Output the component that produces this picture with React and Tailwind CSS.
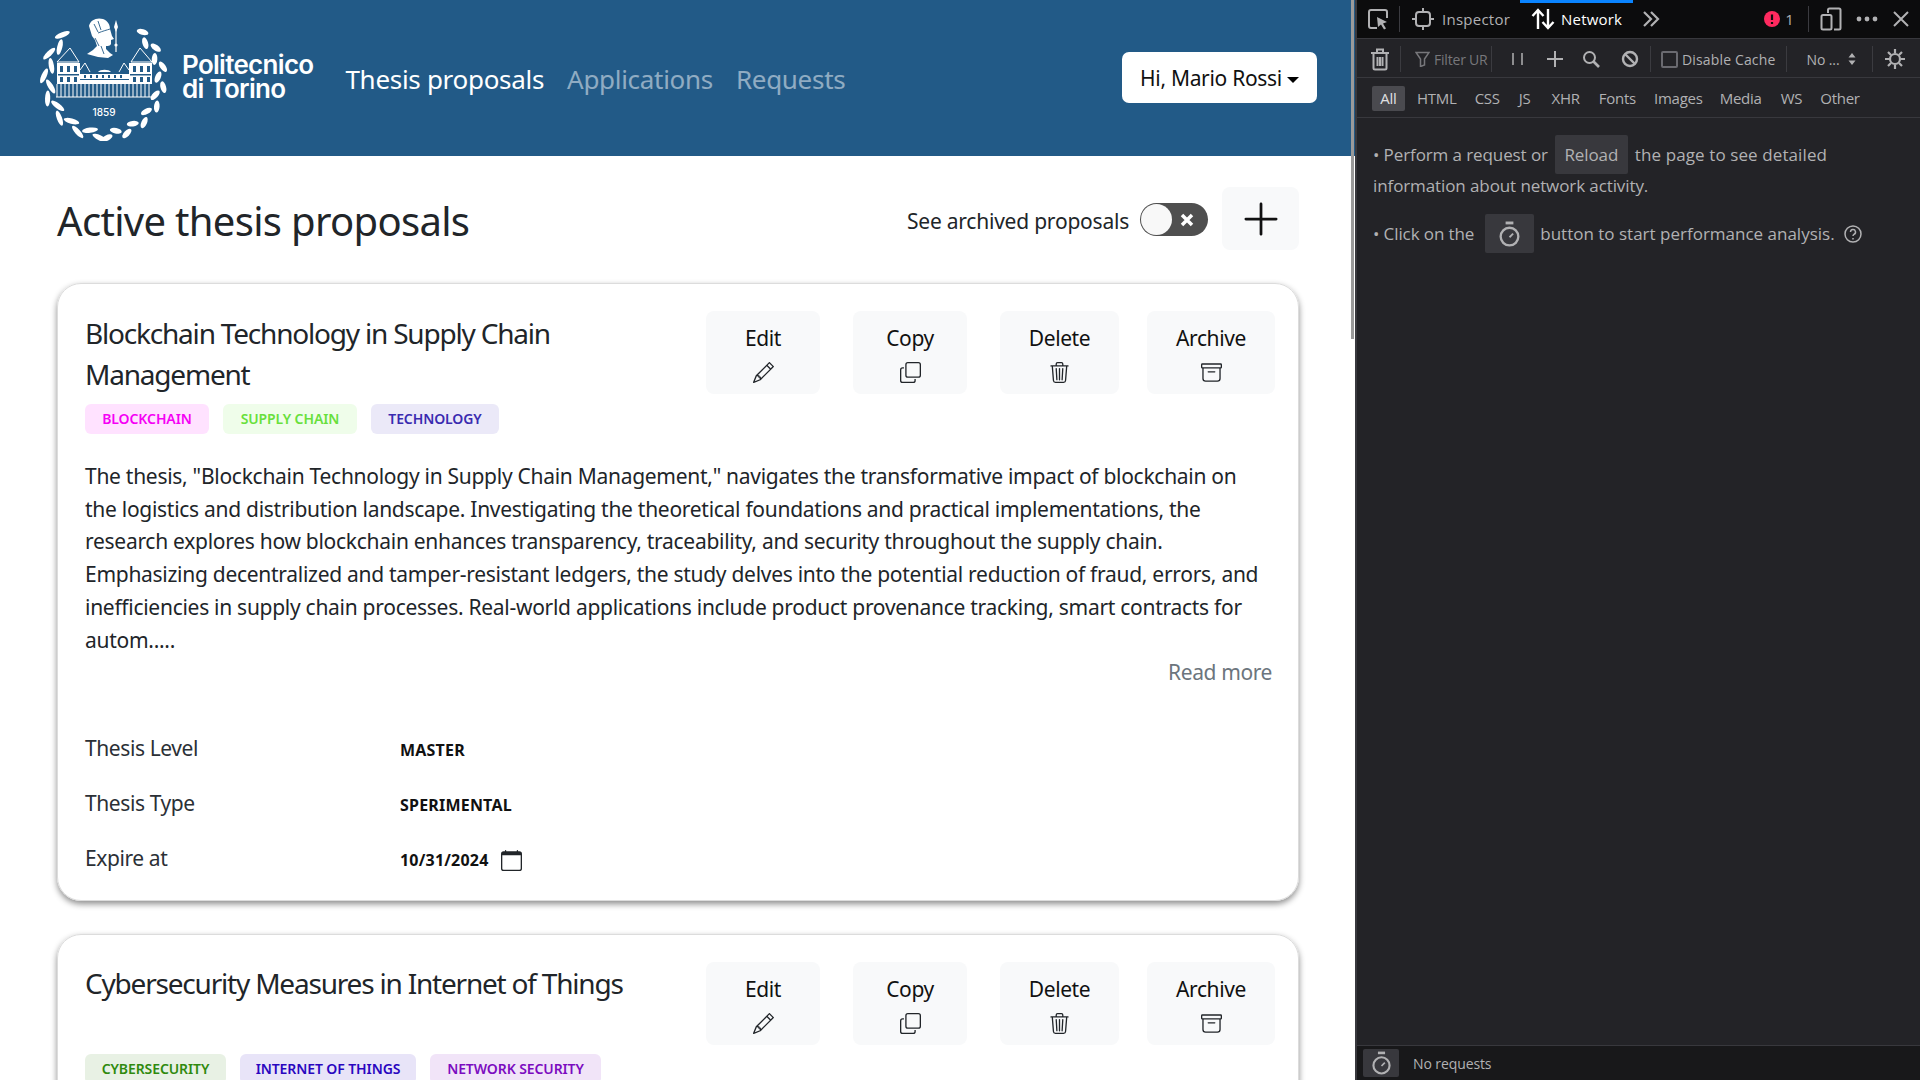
import {
  BsArchive,
  BsCalendar,
  BsCopy,
  BsPencil,
  BsPlusLg,
  BsTrash3,
} from "react-icons/bs";

const tags1 = [
  { label: "BLOCKCHAIN", w: "w-[124px]", cls: "bg-[#ffe2ff] text-[#f500f5]" },
  { label: "SUPPLY CHAIN", w: "w-[134px]", cls: "bg-[#effdea] text-[#68e03c]" },
  { label: "TECHNOLOGY", w: "w-[128px]", cls: "bg-[#ebe9f8] text-[#3a2bb0]" },
];
const tags2 = [
  { label: "CYBERSECURITY", w: "w-[141px]", cls: "bg-[#e8f1e4] text-[#2f8a0e]" },
  { label: "INTERNET OF THINGS", w: "w-[176px]", cls: "bg-[#e8e4f8] text-[#2a06c0]" },
  { label: "NETWORK SECURITY", w: "w-[171px]", cls: "bg-[#f1e4f8] text-[#7c0cc0]" },
];

const description = [
  'The thesis, "Blockchain Technology in Supply Chain Management," navigates the transformative impact of blockchain on',
  "the logistics and distribution landscape. Investigating the theoretical foundations and practical implementations, the",
  "research explores how blockchain enhances transparency, traceability, and security throughout the supply chain.",
  "Emphasizing decentralized and tamper-resistant ledgers, the study delves into the potential reduction of fraud, errors, and",
  "inefficiencies in supply chain processes. Real-world applications include product provenance tracking, smart contracts for",
  "autom.....",
];

const Leaf = ({ x, y, rot, rx = 8, ry = 2.6 }) => (
  <ellipse cx={x} cy={y} rx={rx} ry={ry} fill="white" transform={`rotate(${rot} ${x} ${y})`} />
);

const Logo = () => {
  const cx = 104;
  const cy = 78;
  const leaves = [];
  // left branch, from top to bottom
  for (let i = 0; i < 13; i++) {
    const a = 226 - i * 11;
    const rad = (a * Math.PI) / 180;
    const r = i % 2 ? 54 : 60;
    leaves.push(
      <Leaf key={"l" + i} x={cx + r * Math.cos(rad)} y={cy + r * Math.sin(rad)} rot={a + 90 + (i % 2 ? -22 : 22)} />
    );
  }
  // right branch
  for (let i = 0; i < 15; i++) {
    const a = -50 + i * 9.8;
    const rad = (a * Math.PI) / 180;
    const r = i % 2 ? 54 : 60;
    leaves.push(
      <Leaf key={"r" + i} x={cx + r * Math.cos(rad)} y={cy + r * Math.sin(rad)} rot={a + 90 + (i % 2 ? 24 : -24)} rx={6} ry={2.8} />
    );
  }
  const columns = [];
  for (let x = 57; x <= 152; x += 4) columns.push(`M${x} 84v13`);
  return (
    <svg width="140" height="125" viewBox="36 16 140 125" className="shrink-0">
      {leaves}
      {/* head and spear */}
      <path
        fill="white"
        d="M89 26C90 20 97 17 103 19C108 21 110 25 110 29L112 36L114 39L111 40L111 44C110 46 108 46 106 46L106 49L110 53L113 55L108 58L98 57L87 54L93 50L97 46L95 40L92 36Z"
      />
      <path fill="none" stroke="#225a87" strokeWidth="0.9" d="M98 33C103 31 107 30 110 29M95 38l4 8M94 24l4 8M98 21l3 9M101 46l3 8" />
      <path stroke="white" strokeWidth="1.2" d="M116 30v22" />
      <path fill="white" d="M116 20l2 7-2 5-2-5z" />
      <circle cx="116" cy="45" r="1.6" fill="white" />
      {/* towers */}
      <path fill="none" stroke="white" strokeWidth="1" d="M57 62l13-14 9 14zM131 62l9-14 12 14z" />
      <rect x="57" y="63" width="23" height="21" fill="white" />
      <rect x="129" y="63" width="23" height="21" fill="white" />
      <path fill="#225a87" d="M60 66h3v6h-3zM67 66h3v6h-3zM74 66h3v6h-3zM133 66h3v6h-3zM140 66h3v6h-3zM147 66h3v6h-3z" />
      <path fill="#225a87" d="M58 74h21v1.500h-21zM130 74h21v1.500h-21zM60 77h3v5h-3zM67 77h3v5h-3zM74 77h3v5h-3zM133 77h3v5h-3zM140 77h3v5h-3zM147 77h3v5h-3z" />
      {/* wings and centre */}
      <path fill="none" stroke="white" strokeWidth="1" d="M80 70l5-7 5 9M129 70l-5-7-5 9" />
      <rect x="80" y="74" width="49" height="10" fill="white" />
      <path fill="#225a87" d="M80 79h49v1h-49zM84 75h2v3h-2zM90 75h2v3h-2zM96 75h2v3h-2zM102 75h2v3h-2zM108 75h2v3h-2zM114 75h2v3h-2zM120 75h2v3h-2z" />
      <path fill="white" d="M98 72c2-3 11-3 13 0z" />
      {/* columns */}
      <path fill="none" stroke="white" strokeWidth="1" d={columns.join("") + "M56 97h97"} />
      <text x="104" y="116" fill="white" textAnchor="middle" fontSize="10" fontWeight="500" fontFamily="Inter, sans-serif">
        1859
      </text>
    </svg>
  );
};

const Tag = ({ label, w, cls }) => (
  <span className={`h-[30px] pb-[1px] flex items-center justify-center rounded-md text-[14px] font-semibold tracking-[-0.1px] ${w} ${cls}`}>
    {label}
  </span>
);

const Action = ({ label, w, children }) => (
  <button className={`h-[83px] rounded-lg bg-[#f8f9fa] flex flex-col items-center pt-[12px] text-[#111] text-[21px] leading-[30px] tracking-[-0.4px] ${w}`}>
    {label}
    <span className="mt-[9px] text-[21px] text-[#212529]">{children}</span>
  </button>
);

const Actions = () => (
  <div className="flex shrink-0">
    <Action label="Edit" w="w-[114px]"><BsPencil /></Action>
    <div className="w-[33px]" />
    <Action label="Copy" w="w-[114px]"><BsCopy /></Action>
    <div className="w-[33px]" />
    <Action label="Delete" w="w-[119px]"><BsTrash3 /></Action>
    <div className="w-[28px]" />
    <Action label="Archive" w="w-[128px]"><BsArchive /></Action>
  </div>
);

const Meta = ({ label, children }) => (
  <div className="flex items-center h-[55px]">
    <span className="w-[315px] text-[21px] tracking-[-0.4px] text-[#2b3036] -mt-[3px]">{label}</span>
    <span className="flex items-center text-[16px] font-bold text-[#111] tracking-[0.2px]">{children}</span>
  </div>
);

const Separator = () => <div className="w-px h-[26px] bg-[#3b3b40] shrink-0" />;

const Stopwatch = ({ width = 21, height = 26 }) => (
  <svg width={width} height={height} viewBox="3 1 16 20" fill="none" stroke="#b1b1b3" strokeWidth="1.8">
    <path d="M8 2.500h6" strokeWidth="2.2" />
    <circle cx="11" cy="13" r="6.800" />
    <path d="M11 13.500l2.800-2.800" strokeWidth="1.400" />
  </svg>
);

const filters = ["HTML", "CSS", "JS", "XHR", "Fonts", "Images", "Media", "WS", "Other"];
const filterGaps = ["ml-[12px]", "ml-[18px]", "ml-[19px]", "ml-[21px]", "ml-[19px]", "ml-[18px]", "ml-[17px]", "ml-[19px]", "ml-[18px]"];

const DevTools = () => (
  <aside className="w-[565px] h-full shrink-0 bg-[#232327] border-l-2 border-[#38383d] flex flex-col text-[#b1b1b3] font-['Open_Sans',sans-serif]">
    {/* tab bar */}
    <div className="h-[39px] bg-[#0c0c0d] border-b border-[#38383d] flex items-center relative shrink-0">
      <div className="absolute left-[163px] top-0 w-[113px] h-[3px] bg-[#0a84ff]" />
      <svg width="24" height="24" viewBox="0 0 24 24" className="ml-[9px]" fill="none" stroke="#b1b1b3" strokeWidth="2">
        <path d="M11 21H5a2 2 0 0 1-2-2V5a2 2 0 0 1 2-2h14a2 2 0 0 1 2 2v6" />
        <path d="M11 10l10 5-4 1.500 3 5-2 1-3-5-3 2.500z" fill="#b1b1b3" stroke="none" />
      </svg>
      <div className="w-px h-[26px] bg-[#3b3b40] ml-[9px]" />
      <svg width="22" height="24" viewBox="0 0 22 24" className="ml-[12px]" fill="none" stroke="#b1b1b3" strokeWidth="2">
        <rect x="4" y="5" width="14" height="14" rx="3" />
        <path d="M11 1v4M11 19v4M0 12h4M18 12h4" />
      </svg>
      <span className="ml-[8px] text-[15px] tracking-[0.25px]">Inspector</span>
      <svg width="24" height="24" viewBox="0 0 24 24" className="ml-[21px]" fill="none" stroke="white" strokeWidth="2.4">
        <path d="M7 22V3M1.500 9L7 3l5.500 6M17 2v19M11.500 15l5.500 6 5.500-6" />
      </svg>
      <span className="ml-[6px] text-[15px] text-white tracking-[0.2px]">Network</span>
      <svg width="18" height="18" viewBox="0 0 18 18" className="ml-[20px]" fill="none" stroke="#b1b1b3" strokeWidth="2.2">
        <path d="M2 2l7 7-7 7M9 2l7 7-7 7" />
      </svg>
      <svg width="16" height="16" viewBox="0 0 16 16" className="ml-[104px]">
        <circle cx="8" cy="8" r="8" fill="#ff2a5f" />
        <path d="M8 3.500v5.500M8 11v2" stroke="#0c0c0d" strokeWidth="2.200" />
      </svg>
      <span className="ml-[5px] text-[15px]">1</span>
      <div className="w-px h-[26px] bg-[#3b3b40] ml-[14px]" />
      <svg width="22" height="24" viewBox="0 0 22 24" className="ml-[11px]" fill="none" stroke="#b1b1b3" strokeWidth="2">
        <path d="M8 6V3a1.500 1.500 0 0 1 1.500-1.500H19A1.500 1.500 0 0 1 20.500 3v18a1.500 1.500 0 0 1-1.500 1.500h-5" />
        <rect x="1.500" y="8" width="10" height="14.500" rx="1.500" />
      </svg>
      <svg width="22" height="6" viewBox="0 0 22 6" className="ml-[14px]" fill="#b1b1b3">
        <circle cx="3" cy="3" r="2.400" />
        <circle cx="11" cy="3" r="2.400" />
        <circle cx="19" cy="3" r="2.400" />
      </svg>
      <svg width="16" height="16" viewBox="0 0 16 16" className="ml-[15px]" stroke="#b1b1b3" strokeWidth="2">
        <path d="M1 1l14 14M15 1L1 15" />
      </svg>
    </div>
    {/* toolbar */}
    <div className="h-[39px] pt-[2px] border-b border-[#38383d] flex items-center shrink-0">
      <svg width="20" height="24" viewBox="0 0 20 24" className="ml-[13px]" fill="none" stroke="#b1b1b3" strokeWidth="2">
        <path d="M1 6h18M7 5V2.500h6V5M3.500 6v15a1.500 1.500 0 0 0 1.500 1.500h10a1.500 1.500 0 0 0 1.500-1.500V6M7.500 10v9M10 10v9M12.500 10v9" />
      </svg>
      <div className="ml-[10px]"><Separator /></div>
      <svg width="15" height="16" viewBox="0 0 15 16" className="ml-[14px]" fill="none" stroke="#77777b" strokeWidth="1.500">
        <path d="M1 1.500h13L9.500 8v6l-4 1.500V8z" />
      </svg>
      <span className="ml-[4px] w-[57px] whitespace-nowrap text-[14px] text-[#77777b] tracking-[-0.2px]">Filter UR</span>
      <Separator />
      <svg width="14" height="14" viewBox="0 0 14 14" className="ml-[19px]" stroke="#b1b1b3" strokeWidth="1.500">
        <path d="M2 1v12M11 1v12" />
      </svg>
      <svg width="16" height="16" viewBox="0 0 16 16" className="ml-[22px]" stroke="#b1b1b3" strokeWidth="2">
        <path d="M8 0v16M0 8h16" />
      </svg>
      <svg width="18" height="18" viewBox="0 0 18 18" className="ml-[19px]" fill="none" stroke="#b1b1b3" strokeWidth="2">
        <circle cx="7.500" cy="7.500" r="5.500" />
        <path d="M11.500 11.500l5.500 5.500" strokeWidth="2.600" />
      </svg>
      <svg width="18" height="18" viewBox="0 0 18 18" className="ml-[21px]" fill="none" stroke="#b1b1b3" strokeWidth="2.400">
        <circle cx="9" cy="9" r="7" />
        <path d="M4 4l10 10" />
      </svg>
      <div className="ml-[11px]"><Separator /></div>
      <span className="ml-[10px] w-[17px] h-[17px] rounded-[2px] border-2 border-[#6a6a70] shrink-0" />
      <span className="ml-[4px] text-[14px] tracking-[0.15px] whitespace-nowrap">Disable Cache</span>
      <div className="ml-[11px]"><Separator /></div>
      <span className="ml-[19px] text-[14px] whitespace-nowrap tracking-[-0.1px]">No ...</span>
      <svg width="8" height="14" viewBox="0 0 8 14" className="ml-[8px]" fill="#b1b1b3">
        <path d="M4 1l3.500 4.500h-7zM4 13L.500 8.500h7z" />
      </svg>
      <div className="ml-[16px]"><Separator /></div>
      <svg width="22" height="22" viewBox="0 0 22 22" className="ml-[11px]" fill="none" stroke="#b1b1b3" strokeWidth="2.200">
        <circle cx="11" cy="11" r="5" />
        <path d="M11 1v4M11 17v4M1 11h4M17 11h4M4 4l3 3M15 15l3 3M18 4l-3 3M7 15l-3 3" />
      </svg>
    </div>
    {/* filter row */}
    <div className="h-[40px] pt-[2px] border-b border-[#38383d] flex items-center shrink-0 text-[15px] tracking-[-0.25px]">
      <span className="ml-[15px] h-[25px] w-[33px] rounded-[2px] bg-[#4a4a4f] text-[#e0e0e2] flex items-center justify-center">All</span>
      {filters.map((f, i) => (
        <span key={f} className={filterGaps[i]}>{f}</span>
      ))}
    </div>
    {/* empty notice */}
    <div className="flex-1 pl-[16px] pt-[17px] text-[17px] tracking-[-0.1px]">
      <div className="flex items-center h-[39px] whitespace-nowrap">
        • Perform a request or
        <span className="mx-[7px] h-[39px] w-[73px] rounded-[2px] bg-[#38383d] flex items-center justify-center">Reload</span>
        <span className="tracking-[0.1px]">the page to see detailed</span>
      </div>
      <div className="h-[24px] leading-[24px] whitespace-nowrap">information about network activity.</div>
      <div className="flex items-center h-[39px] mt-[16px] whitespace-nowrap">
        • Click on the
        <span className="ml-[11px] mr-[6px] h-[39px] w-[49px] rounded-[2px] bg-[#38383d] flex items-center justify-center"><Stopwatch /></span>
        <span className="tracking-[0px]">button to start performance analysis.</span>
        <svg width="18" height="18" viewBox="0 0 18 18" className="ml-[9px]" fill="none" stroke="#b1b1b3" strokeWidth="1.500">
          <circle cx="9" cy="9" r="8" />
          <path d="M6.500 7a2.500 2.500 0 1 1 3.500 2.300c-.7.4-1 .8-1 1.700M9 13v1.500" />
        </svg>
      </div>
    </div>
    {/* status bar */}
    <div className="h-[35px] bg-[#18181a] border-t border-[#38383d] flex items-center shrink-0">
      <span className="ml-[6px] w-[36px] h-[28px] rounded-[2px] bg-[#38383d] flex items-center justify-center">
        <Stopwatch width={19} height={24} />
      </span>
      <span className="ml-[14px] text-[14px] tracking-[-0.1px]">No requests</span>
    </div>
  </aside>
);

const App = () => {
  return (
    <div className="flex w-[1920px] h-[1080px] overflow-hidden bg-white font-['Noto_Sans',sans-serif]">
      <div className="relative w-[1355px] shrink-0 h-full overflow-hidden">
        {/* scrollbar thumb */}
        <div className="absolute right-[1px] top-0 w-[3px] h-[339px] bg-[#9a9a9a]" />
        <header className="h-[156px] bg-[#225a87] flex items-center">
          <div className="ml-[36px]"><Logo /></div>
          <div className="ml-[6px] text-white font-['Inter',sans-serif] font-semibold text-[26px] leading-[24px] tracking-[-0.7px] -mt-[2px]">
            <div>Politecnico</div>
            <div>di Torino</div>
          </div>
          <nav className="ml-[32px] flex text-[26px] tracking-[-0.3px] gap-[23px] mt-[2px]">
            <span className="text-white">Thesis proposals</span>
            <span className="text-white/50">Applications</span>
            <span className="text-white/50">Requests</span>
          </nav>
          <button className="ml-auto mr-[38px] mb-[2px] w-[195px] h-[51px] rounded-[7px] bg-white text-[#111] text-[21px] tracking-[-0.3px] flex items-center justify-center pt-[4px]">
            Hi, Mario Rossi
            <span className="ml-[5px] mt-[1px] border-x-[6px] border-x-transparent border-t-[6px] border-t-black" />
          </button>
        </header>

        <main className="pl-[57px] pr-[56px]">
          <div className="flex items-center h-[127px]">
            <h1 className="text-[40px] tracking-[-0.68px] text-[#212529] mt-[3px]">Active thesis proposals</h1>
            <span className="ml-auto text-[21px] tracking-[-0.22px] text-[#212529] mt-[4px]">See archived proposals</span>
            <span className="ml-[11px] relative w-[68px] h-[33px] rounded-full bg-[#4f4f4f] flex items-center justify-end pr-[14px]">
              <span className="absolute left-[1px] top-[1px] w-[31px] h-[31px] rounded-full bg-[#f8f8f8]" />
              <svg width="14" height="14" viewBox="0 0 14 14" stroke="white" strokeWidth="3.500">
                <path d="M2 2l10 10M12 2L2 12" />
              </svg>
            </span>
            <button className="ml-[14px] -mt-[2px] w-[77px] h-[63px] rounded-lg bg-[#f8f9fa] flex items-center justify-center text-[44px] text-[#111]">
              <BsPlusLg />
            </button>
          </div>

          <section className="h-[618px] rounded-[24px] border border-[#dcdcdc] shadow-[0_3px_6px_rgba(0,0,0,0.45)] pl-[27px] pr-[23px] pt-[27px]">
            <div className="flex justify-between">
              <h2 className="w-[520px] text-[28px] leading-[41px] tracking-[-1.2px] text-[#212529] pt-[2px]">
                Blockchain Technology in Supply Chain Management
              </h2>
              <Actions />
            </div>
            <div className="flex gap-[14px] mt-[9px]">
              {tags1.map((t) => (
                <Tag key={t.label} {...t} />
              ))}
            </div>
            <div className="mt-[26px] text-[21px] leading-[32.7px] tracking-[-0.28px] text-[#212529] whitespace-nowrap">
              {description.map((line) => (
                <div key={line}>{line}</div>
              ))}
            </div>
            <div className="text-right text-[21px] leading-[32.7px] tracking-[-0.4px] text-[#6c757d] pr-[3px]">Read more</div>
            <div className="mt-[34px]">
              <Meta label="Thesis Level">MASTER</Meta>
              <Meta label="Thesis Type">SPERIMENTAL</Meta>
              <Meta label="Expire at">
                10/31/2024
                <BsCalendar className="ml-[12px] text-[21px] text-[#212529]" />
              </Meta>
            </div>
          </section>

          <section className="mt-[33px] h-[300px] rounded-[24px] border border-[#dcdcdc] shadow-[0_3px_6px_rgba(0,0,0,0.45)] pl-[27px] pr-[23px] pt-[27px]">
            <div className="flex justify-between">
              <h2 className="w-[560px] text-[28px] leading-[41px] tracking-[-1.2px] text-[#212529] pt-[1px]">
                Cybersecurity Measures in Internet of Things
              </h2>
              <Actions />
            </div>
            <div className="flex gap-[14px] mt-[9px]">
              {tags2.map((t) => (
                <Tag key={t.label} {...t} />
              ))}
            </div>
          </section>
        </main>
      </div>
      <DevTools />
    </div>
  );
};

export default App;
